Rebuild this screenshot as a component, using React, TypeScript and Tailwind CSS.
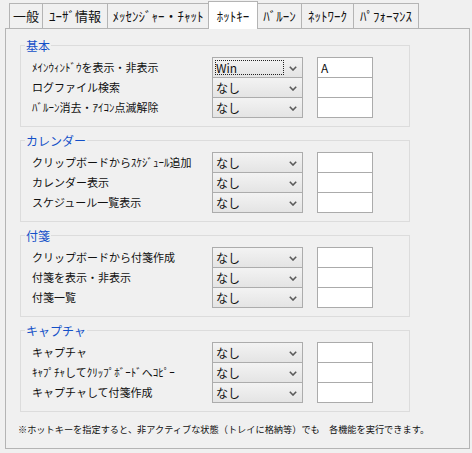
import React from 'react'

const font = "font-['Noto_Sans_CJK_JP','Noto_Sans',sans-serif]"

const tabs = [
  { label: '一般', w: 'w-[34px]' },
  { label: 'ﾕｰｻﾞ情報', w: 'w-[65px]' },
  { label: 'ﾒｯｾﾝｼﾞｬｰ・ﾁｬｯﾄ', w: 'w-[101px]' },
  { label: 'ﾎｯﾄｷｰ', w: 'w-[50px]', active: true },
  { label: 'ﾊﾞﾙｰﾝ', w: 'w-[45px]' },
  { label: 'ﾈｯﾄﾜｰｸ', w: 'w-[52px]' },
  { label: 'ﾊﾟﾌｫｰﾏﾝｽ', w: 'w-[65px]' },
]

type Row = { label: string; mod: string; key?: string; focus?: boolean }

const groups: { title: string; rows: Row[] }[] = [
  {
    title: '基本',
    rows: [
      { label: 'ﾒｲﾝｳｨﾝﾄﾞｳを表示・非表示', mod: 'Win', key: 'A', focus: true },
      { label: 'ログファイル検索', mod: 'なし' },
      { label: 'ﾊﾞﾙｰﾝ消去・ｱｲｺﾝ点滅解除', mod: 'なし' },
    ],
  },
  {
    title: 'カレンダー',
    rows: [
      { label: 'クリップボードからｽｹｼﾞｭｰﾙ追加', mod: 'なし' },
      { label: 'カレンダー表示', mod: 'なし' },
      { label: 'スケジュール一覧表示', mod: 'なし' },
    ],
  },
  {
    title: '付箋',
    rows: [
      { label: 'クリップボードから付箋作成', mod: 'なし' },
      { label: '付箋を表示・非表示', mod: 'なし' },
      { label: '付箋一覧', mod: 'なし' },
    ],
  },
  {
    title: 'キャプチャ',
    rows: [
      { label: 'キャプチャ', mod: 'なし' },
      { label: 'ｷｬﾌﾟﾁｬしてｸﾘｯﾌﾟﾎﾞｰﾄﾞへｺﾋﾟｰ', mod: 'なし' },
      { label: 'キャプチャして付箋作成', mod: 'なし' },
    ],
  },
]

function Combo({ value, focus }: { value: string; focus?: boolean }) {
  return (
    <div className="relative h-[21px] w-[91px] border border-[#acacac] bg-linear-to-b from-[#f3f3f3] to-[#e4e4e4] flex items-center">
      <span className="pl-[3px] text-[12px] leading-[19px] text-[#111]">{value}</span>
      {focus && (
        <span className="absolute left-[2px] right-[18px] top-[2px] bottom-[2px] border border-dotted border-[#222]" />
      )}
      <svg className="absolute right-[5px] top-[8px]" width="8" height="5" viewBox="0 0 8 5">
        <polyline points="0.8,0.8 4,4 7.2,0.8" fill="none" stroke="#5a5a5a" strokeWidth="1.6" />
      </svg>
    </div>
  )
}

function Group({ title, rows, first }: { title: string; rows: Row[]; first?: boolean }) {
  return (
    <div
      className={
        'relative w-[390px] border border-[#dcdcdc] pt-[11px] pb-[9px] pl-[11px] ' +
        (first ? '' : 'mt-[13px]')
      }
    >
      <span className="absolute left-[4px] -top-[8px] px-[1px] bg-[#f0f0f0] text-[12px] leading-[15px] text-[#1450c8]">
        {title}
      </span>
      {rows.map((r, i) => (
        <div key={i} className="flex items-start h-[20px]">
          <div className="w-[180px] text-[11px] leading-[20px] text-[#111] whitespace-nowrap">{r.label}</div>
          <Combo value={r.mod} focus={r.focus} />
          <div className="ml-[14px] h-[21px] w-[56px] border border-[#ababab] bg-white pl-[3px] text-[12px] leading-[19px] text-[#111]">
            {r.key ?? ''}
          </div>
        </div>
      ))}
    </div>
  )
}

export default function App() {
  return (
    <div className={'w-[472px] h-[453px] bg-[#f0f0f0] overflow-hidden ' + font}>
      <div className="relative z-10 flex items-end h-[29px] pl-[9px]">
        {tabs.map((t, i) =>
          t.active ? (
            <div
              key={i}
              className={
                t.w +
                ' -ml-px h-[28px] border-x border-t border-[#b4b4b4] bg-white flex items-center justify-center text-[13px] text-[#111]'
              }
            >
              {t.label}
            </div>
          ) : (
            <div
              key={i}
              className={
                t.w +
                ' mb-px h-[25px] border-t border-r border-[#b4b4b4] bg-[#f0f0f0] flex items-center justify-center text-[13px] text-[#111] ' +
                (i === 0 ? 'border-l' : '') +
                (i === 4 ? ' -ml-px border-l' : '')
              }
            >
              {t.label}
            </div>
          )
        )}
      </div>
      <div className="-mt-px ml-[5px] w-[465px] h-[421px] border border-[#b4b4b4] bg-[#f0f0f0] pt-[16px] pl-[14px]">
        {groups.map((g, i) => (
          <Group key={i} title={g.title} rows={g.rows} first={i === 0} />
        ))}
        <p className="mt-[11px] -ml-[2px] text-[9.2px] leading-[12px] text-[#111] whitespace-nowrap">
          ※ホットキーを指定すると、非アクティブな状態（トレイに格納等）でも　各機能を実行できます。
        </p>
      </div>
    </div>
  )
}
